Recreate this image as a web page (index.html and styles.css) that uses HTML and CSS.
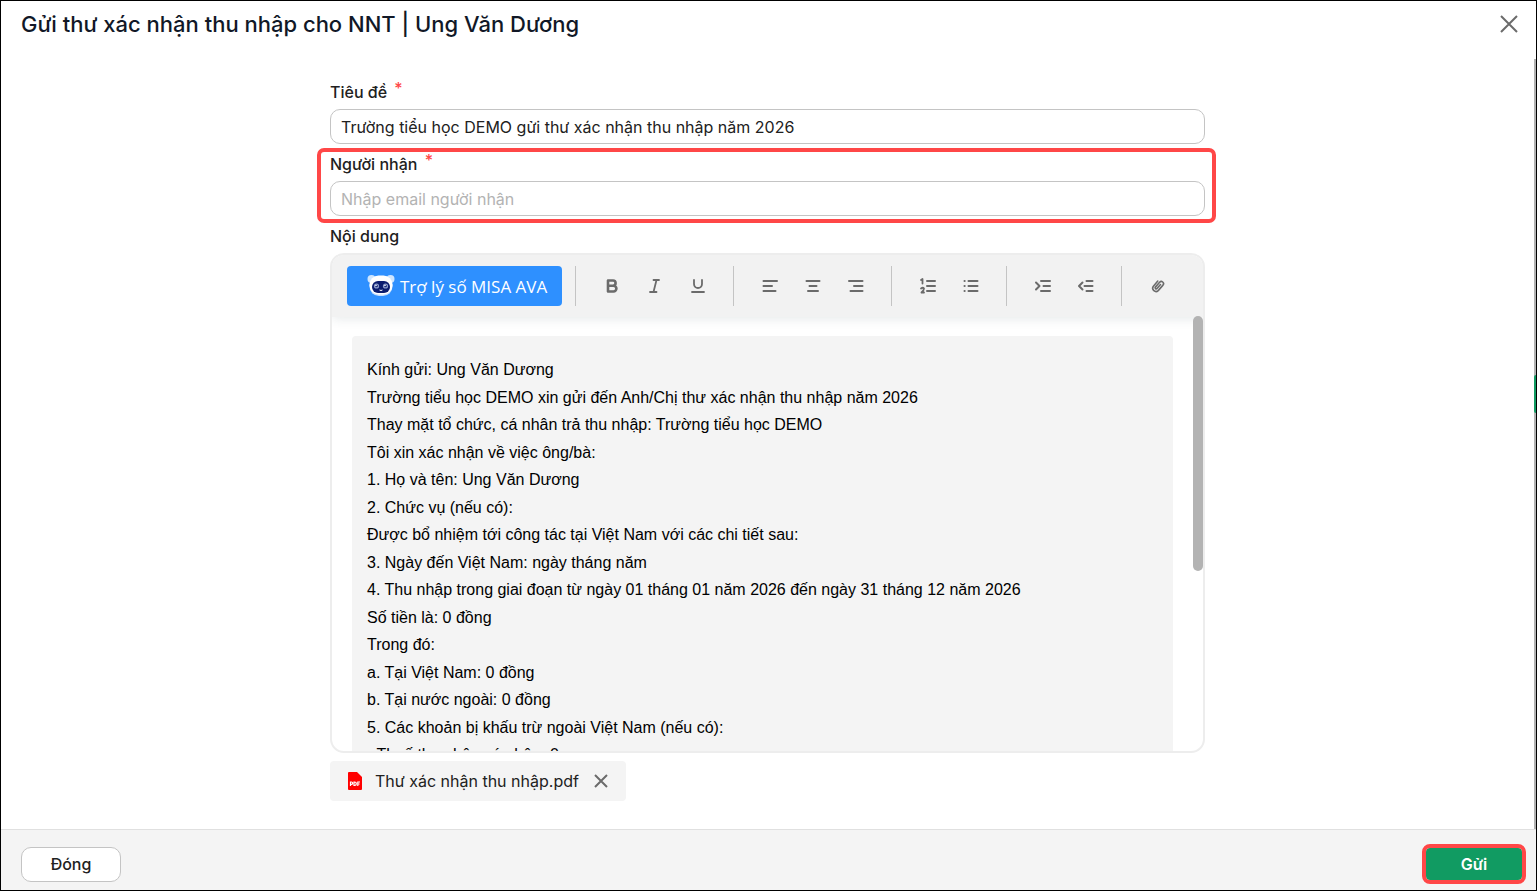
FILE: index.html
```html
<!DOCTYPE html>
<html lang="vi">
<head>
    <meta charset="UTF-8">
    <meta name="viewport" content="width=device-width, initial-scale=1.0">
    <title>Gửi thư xác nhận thu nhập</title>
    <link rel="stylesheet" href="styles.css">
</head>
<body>
    <form class="popup">
        <header class="popup-header">
            <h1>Gửi thư xác nhận thu nhập cho NNT | Ung Văn Dương</h1>
            <button type="button" class="icon-btn" aria-label="Đóng cửa sổ">
                <svg width="20" height="20" viewBox="0 0 20 20"><path d="M2 2l16 16M18 2L2 18"/></svg>
            </button>
        </header>

        <main class="popup-body">
            <div class="content">
                <div class="field">
                    <label for="subject">Tiêu đề <span class="required">*</span></label>
                    <input type="text" id="subject" value="Trường tiểu học DEMO gửi thư xác nhận thu nhập năm 2026">
                </div>

                <div class="field highlight">
                    <label for="receiver">Người nhận <span class="required">*</span></label>
                    <input type="text" id="receiver" placeholder="Nhập email người nhận">
                </div>

                <div class="field">
                    <label id="contentLabel">Nội dung</label>
                    <div class="editor">
                        <div class="toolbar">
                            <button type="button" class="ava">
                                <svg width="28" height="24" viewBox="0 0 28 24">
                                    <circle cx="4.5" cy="5" r="4" fill="#cfe6ff"/>
                                    <circle cx="23.5" cy="5" r="4" fill="#cfe6ff"/>
                                    <rect x="2.5" y="2" width="23" height="20" rx="9.5" fill="#c4defc"/>
                                    <rect x="2.5" y="1.5" width="23" height="19" rx="9" fill="#fff"/>
                                    <rect x="5" y="7" width="18" height="12" rx="6" fill="#0b1c6e"/>
                                    <circle cx="9.5" cy="12" r="2.6" fill="#8c9ccb"/>
                                    <circle cx="18.5" cy="12" r="2.6" fill="#8c9ccb"/>
                                    <circle cx="9.5" cy="12" r="1.3" fill="#0b1c6e"/>
                                    <circle cx="18.5" cy="12" r="1.3" fill="#0b1c6e"/>
                                    <circle cx="9" cy="11.5" r="0.8" fill="#fff"/>
                                    <circle cx="18" cy="11.5" r="0.8" fill="#fff"/>
                                    <path d="M12.5 16q1.5 1 3 0" fill="none" stroke="#fff"/>
                                </svg>
                                Trợ lý số MISA AVA
                            </button>
                            <div class="group">
                                <button type="button" class="tool" aria-label="Đậm">
                                    <svg width="18" height="18" viewBox="0 0 18 18"><path d="M5 3.500h5a2.600 2.600 0 0 1 0 5.200H5zM5 8.700h5.500a2.900 2.900 0 0 1 0 5.800H5z" stroke-width="2.600"/></svg>
                                </button>
                                <button type="button" class="tool" aria-label="Nghiêng">
                                    <svg width="18" height="18" viewBox="0 0 18 18"><path d="M7.500 3H13M4 15h6.500M10.500 3L7.500 15" stroke-width="1.800"/></svg>
                                </button>
                                <button type="button" class="tool" aria-label="Gạch chân">
                                    <svg width="18" height="18" viewBox="0 0 18 18"><path d="M5 3v4a4 4 0 0 0 8 0V3M3 15h12" stroke-width="1.800"/></svg>
                                </button>
                            </div>
                            <div class="group">
                                <button type="button" class="tool" aria-label="Căn trái">
                                    <svg width="18" height="18" viewBox="0 0 18 18"><path d="M2.500 4h13.500M2.500 9h8.500M2.500 14h12"/></svg>
                                </button>
                                <button type="button" class="tool" aria-label="Căn giữa">
                                    <svg width="18" height="18" viewBox="0 0 18 18"><path d="M2.500 4h13M5.500 9h7M4 14h10"/></svg>
                                </button>
                                <button type="button" class="tool" aria-label="Căn phải">
                                    <svg width="18" height="18" viewBox="0 0 18 18"><path d="M2 4h13.500M7 9h8.500M3.500 14h12"/></svg>
                                </button>
                            </div>
                            <div class="group">
                                <button type="button" class="tool" aria-label="Danh sách số">
                                    <svg width="18" height="18" viewBox="0 0 18 18"><path d="M8 4h8M8 9h8M8 14h8"/><path d="M2 3l1.500-1v4.500M2 11.500q2-1.500 3 0 0 1.500-2.500 4H5" stroke-width="1.800"/></svg>
                                </button>
                                <button type="button" class="tool" aria-label="Danh sách chấm">
                                    <svg width="18" height="18" viewBox="0 0 18 18"><path d="M6.500 4h9M6.500 9h9M6.500 14h9M2.500 4h.2M2.500 9h.2M2.500 14h.2"/></svg>
                                </button>
                            </div>
                            <div class="group">
                                <button type="button" class="tool" aria-label="Tăng thụt lề">
                                    <svg width="18" height="18" viewBox="0 0 18 18"><path d="M7 4h9M9.500 9h6.500M7 14h9M2 5.500L5.500 9l-3.500 3.500"/></svg>
                                </button>
                                <button type="button" class="tool" aria-label="Giảm thụt lề">
                                    <svg width="18" height="18" viewBox="0 0 18 18"><path d="M9.500 4h6M7.500 9h8M9.500 14h6M5.500 5.500L2 9l3.500 3.500"/></svg>
                                </button>
                            </div>
                            <div class="group">
                                <button type="button" class="tool" aria-label="Đính kèm">
                                    <svg width="18" height="18" viewBox="0 0 18 18"><path d="M11.500 7.500l-3.500 4a1 1 0 0 1-1.600-1.400l4.200-4.800a2.200 2.200 0 0 1 3.400 2.800l-4.800 5.500a3.300 3.300 0 0 1-5-4.200L8.800 4" stroke-width="1.600"/></svg>
                                </button>
                            </div>
                        </div>
                        <div class="editor-scroll">
                            <div class="letter" contenteditable="true" spellcheck="false" role="textbox" aria-labelledby="contentLabel">
                                <p>Kính gửi: Ung Văn Dương</p>
                                <p>Trường tiểu học DEMO xin gửi đến Anh/Chị thư xác nhận thu nhập năm 2026</p>
                                <p>Thay mặt tổ chức, cá nhân trả thu nhập: Trường tiểu học DEMO</p>
                                <p>Tôi xin xác nhận về việc ông/bà:</p>
                                <p>1. Họ và tên: Ung Văn Dương</p>
                                <p>2. Chức vụ (nếu có):</p>
                                <p>Được bổ nhiệm tới công tác tại Việt Nam với các chi tiết sau:</p>
                                <p>3. Ngày đến Việt Nam: ngày tháng năm</p>
                                <p>4. Thu nhập trong giai đoạn từ ngày 01 tháng 01 năm 2026 đến ngày 31 tháng 12 năm 2026</p>
                                <p>Số tiền là: 0 đồng</p>
                                <p>Trong đó:</p>
                                <p>a. Tại Việt Nam: 0 đồng</p>
                                <p>b. Tại nước ngoài: 0 đồng</p>
                                <p>5. Các khoản bị khấu trừ ngoài Việt Nam (nếu có):</p>
                                <p>- Thuế thu nhập cá nhân: 0</p>
                            </div>
                        </div>
                        <span class="editor-thumb"></span>
                    </div>
                </div>

                <div class="attachment">
                    <svg width="14" height="18" viewBox="0 0 14 18">
                        <path d="M1 0h8l5 5v12a1 1 0 0 1-1 1H1a1 1 0 0 1-1-1V1a1 1 0 0 1 1-1z" fill="#f00"/>
                        <path d="M2.500 14v-4h1a1 1 0 0 1 0 2.300h-1M6 10v3.500h.6a1.600 1.600 0 0 0 0-3.500zM9.800 14v-4H12M9.800 12h1.800" fill="none" stroke="#fff" stroke-width="1.200"/>
                    </svg>
                    <a href="#">Thư xác nhận thu nhập.pdf</a>
                    <button type="button" class="icon-btn" aria-label="Xóa tệp">
                        <svg width="14" height="14" viewBox="0 0 14 14"><path d="M1 1l12 12M13 1L1 13"/></svg>
                    </button>
                </div>
            </div>
            <span class="page-thumb"></span>
            <span class="side-tab"></span>
        </main>

        <footer class="popup-footer">
            <button type="button" class="btn">Đóng</button>
            <button type="submit" class="btn btn-primary">Gửi</button>
        </footer>
    </form>
</body>
</html>
```
FILE: styles.css
```css
* {
    box-sizing: border-box;
}
body {
    margin: 0;
    font-family: Inter, "Liberation Sans", sans-serif;
    font-size: 16px;
    color: #212121;
    background: #fff;
}
button,
input {
    font: inherit;
    color: inherit;
}
button {
    padding: 0;
    border: none;
    background: none;
    cursor: pointer;
}
.popup {
    display: flex;
    flex-direction: column;
    height: 100vh;
    border: 1px solid #000;
}
.popup-header {
    display: flex;
    justify-content: space-between;
    align-items: center;
    height: 46px;
    padding: 0 17px 0 20px;
}
.popup-header h1 {
    margin: 0;
    font-size: 22px;
    font-weight: 500;
    color: #111827;
}
.icon-btn {
    display: flex;
}
.icon-btn svg {
    fill: none;
    stroke: #6b6b6b;
    stroke-width: 2;
}
.popup-body {
    position: relative;
    flex: 1;
    min-height: 0;
    padding: 33px 22px 0 20px;
}
.content {
    max-width: 875px;
    margin: 0 auto;
}
.field {
    position: relative;
    margin-bottom: 8px;
}
.field label {
    display: block;
    margin-bottom: 5px;
    line-height: 24px;
    font-weight: 500;
}
.required {
    margin-left: 3px;
    line-height: 0;
    vertical-align: 4px;
    color: #ff4747;
}
.field input {
    display: block;
    width: 100%;
    height: 35px;
    padding: 0 10px;
    border: 1px solid #c4c4c4;
    border-radius: 10px;
    background: #fff;
    outline: none;
}
.field input::placeholder {
    color: #b3b3b3;
    opacity: 1;
}
/* red frame around the field that has to be filled in */
.highlight::after {
    content: "";
    position: absolute;
    inset: -4px -11px -7px -13px;
    border: 4px solid #ff4747;
    border-radius: 7px;
    pointer-events: none;
}
.editor {
    position: relative;
    display: flex;
    flex-direction: column;
    height: 500px;
    border: 2px solid #ededed;
    border-radius: 14px;
    overflow: hidden;
}
.toolbar {
    display: flex;
    align-items: center;
    height: 62px;
    padding: 0 15px;
    background: #f2f2f2;
    box-shadow: 0 2px 10px rgba(60, 80, 90, 0.12);
    z-index: 1;
}
.ava {
    display: flex;
    align-items: center;
    gap: 5px;
    height: 40px;
    margin-right: 13px;
    padding: 0 15px 0 20px;
    border-radius: 4px;
    background: #2e90ff;
    color: #fff;
    font-family: "Open Sans", "Noto Sans", sans-serif;
    font-size: 17px;
    white-space: nowrap;
}
.group {
    display: flex;
    align-items: center;
    height: 40px;
    padding: 0 14px;
    border-left: 1px solid #c4c4c4;
}
.tool {
    display: flex;
    justify-content: center;
    width: 43px;
}
.tool svg {
    fill: none;
    stroke: #6b6b6b;
    stroke-width: 2;
    stroke-linecap: round;
    stroke-linejoin: round;
}
.editor-scroll {
    flex: 1;
    min-height: 0;
    padding: 19px 30px 0 20px;
    overflow-y: auto;
    scrollbar-width: none;
}
.letter {
    min-height: 700px;
    padding: 20px 15px;
    border-radius: 4px;
    background: #f4f4f4;
    color: #000;
    font-family: "Liberation Sans", Arial, sans-serif;
    font-size: 16px;
    line-height: 1.72;
    outline: none;
}
.letter p {
    margin: 0;
}
.editor-thumb {
    position: absolute;
    top: 61px;
    right: 0;
    width: 10px;
    height: 255px;
    border-radius: 5px;
    background: #b3b3b3;
    z-index: 2;
}
.attachment {
    display: flex;
    align-items: center;
    width: max-content;
    height: 40px;
    padding: 0 18px;
    border-radius: 4px;
    background: #f4f4f4;
}
.attachment a {
    margin: 0 15px 0 13px;
    color: #212121;
    text-decoration: none;
}
.page-thumb {
    position: absolute;
    top: 12px;
    right: 0;
    bottom: 0;
    width: 2px;
    background: #b3b3b3;
}
.side-tab {
    position: absolute;
    top: 328px;
    right: 0;
    width: 2px;
    height: 38px;
    border-radius: 2px 0 0 2px;
    background: #119b62;
}
.popup-footer {
    display: flex;
    justify-content: space-between;
    align-items: center;
    height: 61px;
    padding: 8px 14px 0 20px;
    border-top: 1px solid #e0e0e0;
    background: #f4f4f4;
}
.btn {
    width: 100px;
    height: 35px;
    border: 1px solid #c4c4c4;
    border-radius: 10px;
    background: #fff;
    font-weight: 500;
}
.btn-primary {
    width: 96px;
    height: 32px;
    border: none;
    border-radius: 4px;
    outline: 4px solid #ff4747;
    background: #119b62;
    color: #fff;
    font-weight: 600;
}
```
